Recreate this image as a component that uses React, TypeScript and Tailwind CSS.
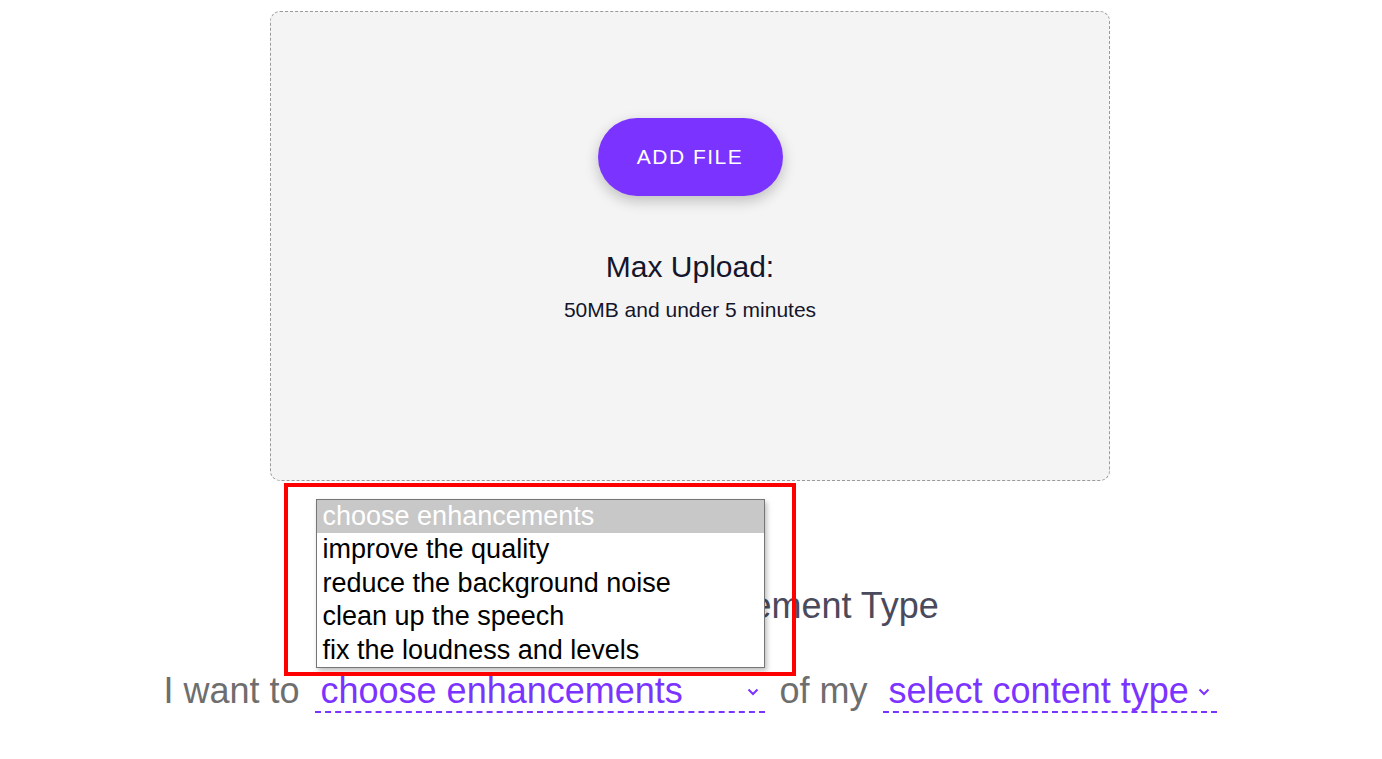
import React from "react";

function Chevron() {
  return (
    <svg width="12" height="8" viewBox="0 0 12 8" className="shrink-0 mt-[2px]">
      <polyline points="1.5,1.5 6,6 10.5,1.5" fill="none" stroke="#7b33ff" strokeWidth="2" />
    </svg>
  );
}

export default function App() {
  const options = [
    "choose enhancements",
    "improve the quality",
    "reduce the background noise",
    "clean up the speech",
    "fix the loudness and levels",
  ];
  return (
    <div
      className="min-h-screen bg-white flex flex-col items-center pr-[2px]"
      style={{ fontFamily: '"Liberation Sans", Arial, sans-serif' }}
    >
      <div className="mt-[11px] w-[840px] h-[470px] border border-dashed border-[#9a9a9a] rounded-[10px] bg-[#f4f4f4] flex flex-col items-center pt-[106px]">
        <button className="w-[185px] h-[78px] rounded-full bg-[#7b33ff] text-white text-[21px] tracking-[1.5px] shadow-[0_5px_14px_rgba(0,0,0,0.22)]">
          ADD FILE
        </button>
        <div className="mt-[54px] text-[30px] leading-[34px] text-[#15152b] whitespace-nowrap">Max Upload:</div>
        <div className="mt-[14px] text-[21px] leading-[24px] text-[#15152b] whitespace-nowrap">50MB and under 5 minutes</div>
      </div>

      <div className="mt-[104px] text-[36px] leading-[41px] text-[#4a4a5c] whitespace-nowrap pl-[4px]">Choose an Enhancement Type</div>

      <div className="mt-[44px] flex items-start gap-[15px] text-[36px] leading-[41px] whitespace-nowrap">
        <span className="text-[#6e6e6e] shrink-0">I want to</span>
        <div className="relative shrink-0 w-[450px] h-[43px] border-b-2 border-dashed border-[#7b33ff] flex items-center pl-[6px] pr-[6px] text-[#7b33ff]">
          <span className="flex-1">choose enhancements</span>
          <Chevron />
          <div className="absolute left-[1px] bottom-[calc(100%+2px)] w-[449px] h-[169px] bg-white border border-[#767676] shadow-[2px_3px_5px_rgba(0,0,0,0.25)] z-10 flex flex-col text-[27px] leading-[33.4px]">
            {options.map((o, i) => (
              <div
                key={o}
                className={
                  i === 0
                    ? "bg-[#c8c8c8] text-white pl-[6px]"
                    : "text-black pl-[6px]"
                }
              >
                {o}
              </div>
            ))}
          </div>
          <div className="absolute left-[-31px] top-[-187px] w-[512px] h-[193px] border-4 border-[#ff0000] z-20 pointer-events-none" />
        </div>
        <span className="text-[#6e6e6e] shrink-0">of my</span>
        <div className="shrink-0 w-[334px] h-[43px] border-b-2 border-dashed border-[#7b33ff] flex items-center pl-[6px] pr-[7px] text-[#7b33ff]">
          <span className="flex-1">select content type</span>
          <Chevron />
        </div>
      </div>
    </div>
  );
}
